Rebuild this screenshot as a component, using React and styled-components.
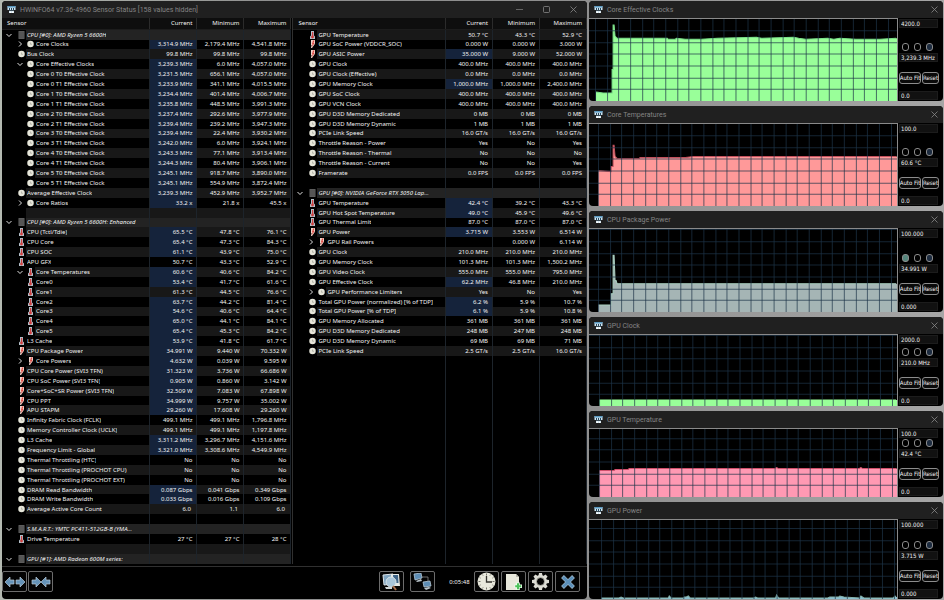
import React from 'react'
import styled, { createGlobalStyle, css } from 'styled-components'

const GlobalStyle = createGlobalStyle`
  * {
    box-sizing: border-box;
  }
  body {
    margin: 0;
    background: linear-gradient(90deg, #b4bab2, #8e8e8e 30%, #8e8e8e 60%, #a6a6a6);
    color: #f2f2f2;
    font-family: 'Noto Sans', 'Open Sans', sans-serif;
    font-size: 6px;
    line-height: 8px;
  }
  button,
  input {
    font: inherit;
    color: inherit;
    margin: 0;
    padding: 0;
  }
`

const Desktop = styled.div`
  display: grid;
  grid-template-columns: 585fr 354fr;
  gap: 2px;
  height: 100vh;
  min-height: 500px;
  padding: 1px 1px 1px 2px;
`

const Window = styled.section`
  display: flex;
  flex-direction: column;
  min-width: 0;
  min-height: 0;
  flex: ${p => p.$weight || 1} 1 0;
  background: #000;
  border-radius: 4px;
  overflow: hidden;
`

const TitleBar = styled.header`
  display: flex;
  align-items: center;
  flex: none;
  height: 17px;
  padding: 0 5px;
  background: #202020;
  color: #848484;
`

const Title = styled.h1`
  flex: 1;
  margin: 0 0 0 4px;
  font-family: Roboto, sans-serif;
  font-size: 7px;
  font-weight: 400;
  line-height: 10px;
  white-space: nowrap;
`

const WindowButton = styled.button`
  display: flex;
  align-items: center;
  justify-content: center;
  width: ${p => (p.$wide ? 27 : 8)}px;
  height: 12px;
  border: 0;
  background: none;
`

const WindowButtons = styled.div`
  display: flex;
  margin-right: -5px;
`

const Panels = styled.div`
  display: grid;
  grid-template-columns: 289fr 294fr;
  gap: 1px;
  flex: 1;
  min-height: 0;
  padding-bottom: 2px;
  border-bottom: 1px solid #303030;
`

const Panel = styled.div`
  min-width: 0;
  height: 100%;
  ${p =>
    p.$divided &&
    css`
      border-left: 1px solid #303030;
    `}
`

const Table = styled.table`
  width: 100%;
  height: 100%;
  table-layout: fixed;
  border-collapse: collapse;
`

const HeadCell = styled.th`
  width: ${p => (p.$name ? 'auto' : '47px')};
  height: 11px;
  padding: ${p => (p.$name ? '0 0 0 5px' : '0 4px 0 0')};
  border-right: 1px solid #2b2b2b;
  border-bottom: 1px solid #1c1c1c;
  background: #0e0e0e;
  font-weight: 400;
  text-align: ${p => (p.$name ? 'left' : 'right')};
`

const rowColor = p => (p.$group ? '#232323' : p.$striped ? '#181818' : '#000')

const NameCell = styled.td`
  height: 8px;
  padding: 0;
  border-right: 1px solid #1d242b;
`

const NameLine = styled.div`
  display: flex;
  align-items: center;
  height: 100%;
`

const Gutter = styled.span`
  display: flex;
  align-items: center;
  justify-content: flex-end;
  flex: none;
  gap: ${p => (p.$group ? 6 : 4)}px;
  width: ${p => (p.$level ? 33 : 24)}px;
  padding-right: 1px;
`

const Label = styled.span`
  flex: 1;
  min-width: 0;
  align-self: stretch;
  display: flex;
  align-items: center;
  padding-left: 1px;
  background: ${rowColor};
  ${p =>
    p.$group &&
    css`
      font-style: italic;
    `}
`

const LabelText = styled.span`
  overflow: hidden;
  text-overflow: ellipsis;
  white-space: nowrap;
`

const ValueCell = styled.td`
  padding: 0 4px 0 0;
  border-right: 1px solid #1d242b;
  background: ${p => (p.$changed ? '#15233b' : rowColor(p))};
  text-align: right;
  white-space: pre;
`

const Toggle = styled.button`
  display: flex;
  border: 0;
  background: none;
`

const ToolBar = styled.footer`
  display: flex;
  align-items: center;
  flex: none;
  height: 32px;
  padding: 0 7px 3px 0;
`

const ToolButton = styled.button`
  display: flex;
  align-items: center;
  justify-content: center;
  width: 25px;
  height: 21px;
  border: 1px solid #6c6c6c;
  border-radius: 2px;
  background: #030303;
`

const ToolGroup = styled.div`
  display: flex;
  align-items: center;
  gap: ${p => p.$gap}px;
  ${p =>
    p.$push &&
    css`
      margin-left: auto;
    `}
`

const Elapsed = styled.time`
  width: 39px;
  padding-left: 10px;
  text-align: center;
`

const GraphColumn = styled.div`
  display: flex;
  flex-direction: column;
  gap: 5px;
  min-width: 0;
  min-height: 0;
`

const GraphBody = styled.div`
  display: flex;
  flex: 1;
  min-height: 0;
`

const Plot = styled.svg`
  display: block;
  flex: 1;
  min-width: 0;
  height: 100%;
  border: solid #8a8a8a;
  border-width: 1px 1px 0 0;
`

const Controls = styled.div`
  display: flex;
  flex-direction: column;
  align-items: flex-start;
  flex: none;
  width: 45px;
  padding: 1px 4px 1px 1px;
`

const ScaleInput = styled.input`
  flex: none;
  width: 39px;
  height: 9px;
  padding: 0 1px;
  border: 1px solid #1c1c1c;
  background: #111;
  font-family: 'DejaVu Sans Condensed', 'DejaVu Sans', sans-serif;
  line-height: 7px;
`

const Dots = styled.div`
  display: flex;
  gap: 5px;
  margin: auto 0 2px 3px;
`

const Dot = styled.button`
  width: 7px;
  height: 8px;
  border: 1px solid #8c8c8c;
  border-radius: 3px;
  background: ${p => p.$color || '#000'};
`

const GraphButtons = styled.div`
  display: flex;
  gap: 1px;
  margin: 10px 0 7px;
`

const GraphButton = styled.button`
  display: flex;
  align-items: center;
  justify-content: center;
  width: ${p => p.$width}px;
  height: 12px;
  border: 1px solid #8c8c8c;
  border-radius: 3px;
  background: #0a0a0a;
  font-family: 'DejaVu Sans Condensed', 'DejaVu Sans', sans-serif;
  white-space: nowrap;
`

const LogoIcon = () => (
  <svg width="9" height="9" viewBox="0 0 18 18">
    <path d="M1 2h16v8h-3v6H4v-6H1z" fill="#cfe3ee" />
    <path d="M1 2h16v3H1z" fill="#5a9ac2" />
    <path d="M4 6h2v4H4zM8 6h2v4H8zM12 6h2v4h-2z" fill="#24465c" />
    <path d="M4 10h10v2H4z" fill="#3a4a54" />
    <path d="M5 13h3v3H5zM10 13h3v3h-3z" fill="#fff" />
  </svg>
)

const ClockIcon = () => (
  <svg width="7" height="8" viewBox="0 0 14 16">
    <circle cx="7" cy="8" r="6.5" fill="#e6e6da" />
    <path d="M7 5v3.5h3" fill="none" stroke="#a8a89e" strokeWidth="1.5" />
  </svg>
)

const ThermoIcon = () => (
  <svg width="7" height="8" viewBox="0 0 14 16">
    <path d="M4 0h6v9l2 2v5H2v-5l2-2z" fill="#b3bfc8" />
    <path d="M6 2h2.5v9H6z" fill="#d04040" />
    <circle cx="7" cy="12" r="2.8" fill="#d04040" />
  </svg>
)

const BoltIcon = () => (
  <svg width="7" height="8" viewBox="0 0 14 16">
    <path d="M4 0h8v7l-1 2-5 7H4l1-6H4z" fill="#f1d3ca" />
    <path d="M8 1h3L9 6h2l-5 8 1-6H6z" fill="#dc4a44" />
  </svg>
)

const ChipIcon = () => (
  <svg width="7" height="8" viewBox="0 0 14 16">
    <path d="M1 0h12v16H1z" fill="#5c5c5c" />
    <path d="M0 4h14M0 8h14M0 12h14" stroke="#424242" strokeWidth="1" />
  </svg>
)

const Chevron = ({ open }) => (
  <svg width="6" height="6" viewBox="0 0 12 12">
    <path
      d={open ? 'M1 4l5 5 5-5' : 'M4 1l5 5-5 5'}
      fill="none"
      stroke="#e0e0e0"
      strokeWidth="2"
    />
  </svg>
)

const CloseIcon = () => (
  <svg width="7" height="7" viewBox="0 0 7 7">
    <path d="M.5.5l6 6M6.5.5l-6 6" stroke="#8a8a8a" strokeWidth="0.8" />
  </svg>
)

const MinimizeIcon = () => (
  <svg width="7" height="7" viewBox="0 0 7 7">
    <path d="M0 3.5h7" stroke="#777" strokeWidth="0.8" />
  </svg>
)

const MaximizeIcon = () => (
  <svg width="7" height="7" viewBox="0 0 7 7">
    <rect x="0.5" y="0.5" width="6" height="6" rx="1" fill="none" stroke="#888" strokeWidth="0.8" />
  </svg>
)

const ExpandIcon = () => (
  <svg width="20" height="12" viewBox="0 0 20 12">
    <path
      d="M0 6l5-5v3h4v4H5v3zM20 6l-5-5v3h-4v4h4v3z"
      fill="#6593b8"
      stroke="#b9c9d4"
      strokeWidth="0.7"
    />
  </svg>
)

const CollapseIcon = () => (
  <svg width="20" height="12" viewBox="0 0 20 12">
    <path
      d="M10 6L5 1v3H1v4h4v3zM10 6l5-5v3h4v4h-4v3z"
      fill="#6593b8"
      stroke="#b9c9d4"
      strokeWidth="0.7"
    />
  </svg>
)

const SensorsIcon = () => (
  <svg width="19" height="18" viewBox="0 0 19 18">
    <path d="M1 2l10-1 1 10-10 1z" fill="#7ea3bf" stroke="#dfe6ea" />
    <path d="M9 1h8l1 12h-9z" fill="#e4e8e6" />
    <path d="M11 2h5l.5 8h-5z" fill="#3d6488" />
    <circle cx="9" cy="9" r="5" fill="#a9c6da" stroke="#d9e3e8" />
    <path d="M11 13l3 4" stroke="#a56c4c" strokeWidth="2" />
    <path d="M3 14h7v2H4z" fill="#cfd6d8" />
  </svg>
)

const NetworkIcon = () => (
  <svg width="19" height="17" viewBox="0 0 19 17">
    <path d="M9 4h6v4" fill="none" stroke="#8a8a8a" strokeWidth="0.8" />
    <path d="M1 1l7-1 1 5-7 2z" fill="#5d8db5" stroke="#b5c8d6" strokeWidth="0.8" />
    <path d="M3 8l5-2 1 2-5 1z" fill="#b9c4ca" />
    <path d="M10 9l7-1 1 5-7 1z" fill="#5d8db5" stroke="#b5c8d6" strokeWidth="0.8" />
    <path d="M11 15l5-1 2 1-5 2z" fill="#b9c4ca" />
  </svg>
)

const BigClockIcon = () => (
  <svg width="19" height="19" viewBox="0 0 19 19">
    <circle cx="9.5" cy="9.5" r="9" fill="#e8e8dc" />
    <path
      d="M9.5 1.5v2M9.5 15.5v2M1.5 9.5h2M15.5 9.5h2M5.5 2.6l.6 1M13.5 2.6l-.6 1M5.5 16.4l.6-1M13.5 16.4l-.6-1M2.6 5.5l1 .6M16.4 5.5l-1 .6M2.6 13.5l1-.6M16.4 13.5l-1-.6"
      stroke="#55554e"
      strokeWidth="0.8"
    />
    <path d="M9.5 4v6H15" fill="none" stroke="#33332e" strokeWidth="1.3" />
  </svg>
)

const LogFileIcon = () => (
  <svg width="18" height="18" viewBox="0 0 18 18">
    <path d="M1 1h10l3 3v13H1z" fill="#e8e8dc" />
    <path d="M11 1v3h3z" fill="#b5b5aa" />
    <path d="M13 9.5v7.5M9.5 13.3H17" stroke="#eaffea" strokeWidth="3.6" />
    <path d="M13 10.3v6M10.2 13.3h6" stroke="#4cc25a" strokeWidth="2" />
  </svg>
)

const teeth = [0, 45, 90, 135, 180, 225, 270, 315]

const SettingsIcon = () => (
  <svg width="19" height="19" viewBox="0 0 19 19">
    {teeth.map(angle => (
      <path key={angle} d="M8 1h3l.6 3H7.4z" fill="#dcdcd4" transform={`rotate(${angle} 9.5 9.5)`} />
    ))}
    <circle cx="9.5" cy="9.5" r="5" fill="none" stroke="#dcdcd4" strokeWidth="3" />
    <circle cx="9.5" cy="9.5" r="4" fill="none" stroke="#77776f" strokeWidth="0.6" />
  </svg>
)

const QuitIcon = () => (
  <svg width="14" height="14" viewBox="0 0 14 14">
    <path d="M1.5 1.5l11 11M12.5 1.5l-11 11" stroke="#a3bccd" strokeWidth="4" />
    <path d="M2 2l10 10M12 2L2 12" stroke="#5b8fb9" strokeWidth="3" />
  </svg>
)

const icons = { clock: ClockIcon, temp: ThermoIcon, power: BoltIcon, chip: ChipIcon }

const group = name => ({ name, icon: 'chip', group: true, open: true })
const blank = { name: '' }

// a leading * on the current value marks it as changed
const row = (icon, name, current, min, max, extra) => ({
  icon,
  name,
  changed: current[0] === '*',
  values: [current.replace('*', ''), min, max],
  ...extra
})
const child = { level: 1 }
const opened = { level: 1, toggle: true, open: true }
const closed = { level: 1, toggle: true, open: false }

const cpuRows = [
  group('CPU [#0]: AMD Ryzen 5 6600H'),
  row('clock', 'Core Clocks', '*3,314.9 MHz', '2,179.4 MHz', '4,541.8 MHz', closed),
  row('clock', 'Bus Clock', '99.8 MHz', '99.8 MHz', '99.8 MHz'),
  row('clock', 'Core Effective Clocks', '*3,239.3 MHz', '6.0 MHz', '4,057.0 MHz', opened),
  row('clock', 'Core 0 T0 Effective Clock', '*3,231.5 MHz', '656.1 MHz', '4,057.0 MHz', child),
  row('clock', 'Core 0 T1 Effective Clock', '*3,233.9 MHz', '341.1 MHz', '4,015.5 MHz', child),
  row('clock', 'Core 1 T0 Effective Clock', '*3,234.4 MHz', '401.4 MHz', '4,006.7 MHz', child),
  row('clock', 'Core 1 T1 Effective Clock', '*3,235.8 MHz', '448.5 MHz', '3,991.3 MHz', child),
  row('clock', 'Core 2 T0 Effective Clock', '*3,237.4 MHz', '292.6 MHz', '3,977.9 MHz', child),
  row('clock', 'Core 2 T1 Effective Clock', '*3,239.4 MHz', '239.2 MHz', '3,947.3 MHz', child),
  row('clock', 'Core 3 T0 Effective Clock', '*3,239.4 MHz', '22.4 MHz', '3,930.2 MHz', child),
  row('clock', 'Core 3 T1 Effective Clock', '*3,242.0 MHz', '6.0 MHz', '3,924.1 MHz', child),
  row('clock', 'Core 4 T0 Effective Clock', '*3,243.3 MHz', '77.1 MHz', '3,913.4 MHz', child),
  row('clock', 'Core 4 T1 Effective Clock', '*3,244.3 MHz', '80.4 MHz', '3,906.1 MHz', child),
  row('clock', 'Core 5 T0 Effective Clock', '*3,245.1 MHz', '918.7 MHz', '3,890.0 MHz', child),
  row('clock', 'Core 5 T1 Effective Clock', '*3,245.1 MHz', '554.9 MHz', '3,872.4 MHz', child),
  row('clock', 'Average Effective Clock', '*3,239.3 MHz', '452.9 MHz', '3,952.7 MHz'),
  row('clock', 'Core Ratios', '*33.2 x', '21.8 x', '45.5 x', closed),
  blank,
  group('CPU [#0]: AMD Ryzen 5 6600H: Enhanced'),
  row('temp', 'CPU (Tctl/Tdie)', '*65.5 °C', '47.8 °C', '76.1 °C'),
  row('temp', 'CPU Core', '*65.4 °C', '47.3 °C', '84.3 °C'),
  row('temp', 'CPU SOC', '*61.1 °C', '43.9 °C', '75.0 °C'),
  row('temp', 'APU GFX', '50.7 °C', '43.3 °C', '52.9 °C'),
  row('temp', 'Core Temperatures', '*60.6 °C', '40.6 °C', '84.2 °C', opened),
  row('temp', 'Core0', '*53.4 °C', '41.7 °C', '61.6 °C', child),
  row('temp', 'Core1', '61.3 °C', '44.5 °C', '76.6 °C', child),
  row('temp', 'Core2', '*63.7 °C', '44.2 °C', '81.4 °C', child),
  row('temp', 'Core3', '*54.6 °C', '40.6 °C', '64.4 °C', child),
  row('temp', 'Core4', '*65.0 °C', '44.1 °C', '84.1 °C', child),
  row('temp', 'Core5', '*65.4 °C', '45.3 °C', '84.2 °C', child),
  row('temp', 'L3 Cache', '*53.9 °C', '41.8 °C', '61.7 °C'),
  row('power', 'CPU Package Power', '*34.991 W', '9.440 W', '70.332 W'),
  row('power', 'Core Powers', '*4.632 W', '0.039 W', '9.595 W', closed),
  row('power', 'CPU Core Power (SVI3 TFN)', '*31.323 W', '3.736 W', '66.686 W'),
  row('power', 'CPU SoC Power (SVI3 TFN)', '*0.905 W', '0.860 W', '3.142 W'),
  row('power', 'Core+SoC+SR Power (SVI3 TFN)', '*32.509 W', '7.083 W', '67.898 W'),
  row('power', 'CPU PPT', '*34.999 W', '9.757 W', '35.002 W'),
  row('power', 'APU STAPM', '*29.260 W', '17.608 W', '29.260 W'),
  row('clock', 'Infinity Fabric Clock (FCLK)', '499.1 MHz', '499.1 MHz', '1,796.8 MHz'),
  row('clock', 'Memory Controller Clock (UCLK)', '499.1 MHz', '499.1 MHz', '1,197.8 MHz'),
  row('clock', 'L3 Cache', '*3,311.2 MHz', '3,296.7 MHz', '4,151.6 MHz'),
  row('clock', 'Frequency Limit - Global', '*3,321.0 MHz', '3,308.6 MHz', '4,549.9 MHz'),
  row('clock', 'Thermal Throttling (HTC)', 'No', 'No', 'No'),
  row('clock', 'Thermal Throttling (PROCHOT CPU)', 'No', 'No', 'No'),
  row('clock', 'Thermal Throttling (PROCHOT EXT)', 'No', 'No', 'No'),
  row('clock', 'DRAM Read Bandwidth', '*0.087 Gbps', '0.041 Gbps', '0.349 Gbps'),
  row('clock', 'DRAM Write Bandwidth', '*0.033 Gbps', '0.016 Gbps', '0.109 Gbps'),
  row('clock', 'Average Active Core Count', '6.0 ', '1.1 ', '6.0 '),
  blank,
  group('S.M.A.R.T.: YMTC PC411-512GB-B (YMA...'),
  row('temp', 'Drive Temperature', '27 °C', '27 °C', '28 °C'),
  blank,
  group('GPU [#1]: AMD Radeon 600M series:')
]

const gpuRows = [
  row('temp', 'GPU Temperature', '50.7 °C', '43.3 °C', '52.9 °C'),
  row('power', 'GPU SoC Power (VDDCR_SOC)', '0.000 W', '0.000 W', '3.000 W'),
  row('power', 'GPU ASIC Power', '*35.000 W', '9.000 W', '52.000 W'),
  row('clock', 'GPU Clock', '400.0 MHz', '400.0 MHz', '400.0 MHz'),
  row('clock', 'GPU Clock (Effective)', '0.0 MHz', '0.0 MHz', '0.0 MHz'),
  row('clock', 'GPU Memory Clock', '*1,000.0 MHz', '1,000.0 MHz', '2,400.0 MHz'),
  row('clock', 'GPU SoC Clock', '400.0 MHz', '400.0 MHz', '400.0 MHz'),
  row('clock', 'GPU VCN Clock', '400.0 MHz', '400.0 MHz', '400.0 MHz'),
  row('clock', 'GPU D3D Memory Dedicated', '0 MB', '0 MB', '0 MB'),
  row('clock', 'GPU D3D Memory Dynamic', '1 MB', '1 MB', '1 MB'),
  row('clock', 'PCIe Link Speed', '16.0 GT/s', '16.0 GT/s', '16.0 GT/s'),
  row('clock', 'Throttle Reason - Power', 'Yes', 'No', 'Yes'),
  row('clock', 'Throttle Reason - Thermal', 'No', 'No', 'No'),
  row('clock', 'Throttle Reason - Current', 'No', 'No', 'Yes'),
  row('clock', 'Framerate', '0.0 FPS', '0.0 FPS', '0.0 FPS'),
  blank,
  group('GPU [#0]: NVIDIA GeForce RTX 3050 Lap...'),
  row('temp', 'GPU Temperature', '*42.4 °C', '39.2 °C', '43.3 °C'),
  row('temp', 'GPU Hot Spot Temperature', '*49.0 °C', '45.9 °C', '49.6 °C'),
  row('temp', 'GPU Thermal Limit', '87.0 °C', '87.0 °C', '87.0 °C'),
  row('power', 'GPU Power', '*3.715 W', '3.553 W', '6.514 W'),
  row('power', 'GPU Rail Powers', '', '0.000 W', '6.114 W', closed),
  row('clock', 'GPU Clock', '210.0 MHz', '210.0 MHz', '210.0 MHz'),
  row('clock', 'GPU Memory Clock', '101.3 MHz', '101.3 MHz', '1,500.2 MHz'),
  row('clock', 'GPU Video Clock', '555.0 MHz', '555.0 MHz', '795.0 MHz'),
  row('clock', 'GPU Effective Clock', '*62.2 MHz', '46.8 MHz', '210.0 MHz'),
  row('clock', 'GPU Performance Limiters', 'Yes', 'No', 'Yes', closed),
  row('clock', 'Total GPU Power (normalized) [% of TDP]', '*6.2 %', '5.9 %', '10.7 %'),
  row('clock', 'Total GPU Power [% of TDP]', '*6.1 %', '5.9 %', '10.8 %'),
  row('clock', 'GPU Memory Allocated', '361 MB', '361 MB', '361 MB'),
  row('clock', 'GPU D3D Memory Dedicated', '248 MB', '247 MB', '248 MB'),
  row('clock', 'GPU D3D Memory Dynamic', '69 MB', '69 MB', '71 MB'),
  row('clock', 'PCIe Link Speed', '2.5 GT/s', '2.5 GT/s', '16.0 GT/s')
]

const graphs = [
  {
    title: 'Core Effective Clocks',
    top: '4200.0',
    value: '3,239.3 MHz',
    bottom: '0.0',
    weight: 100,
    height: 81,
    firstLine: 6,
    fill: '#99ff99',
    stroke: '#7be08a',
    points: [[7, 9], [14, 8], [23, 8], [23, 31], [24, 31], [24, 75], [25, 75], [26, 64], [28, 62], [78, 62], [79, 61], [86, 61], [87, 62], [96, 61], [112, 61], [128, 62], [167, 63], [172, 62], [204, 63], [209, 62], [216, 61], [238, 62], [244, 61], [250, 62], [266, 61], [290, 61], [306, 62]]
  },
  {
    title: 'Core Temperatures',
    top: '100.0',
    value: '60.6 °C',
    bottom: '0.0',
    weight: 100,
    height: 81,
    firstLine: 9,
    fill: '#ff9999',
    stroke: '#c2505c',
    points: [[9, 35], [22, 34], [22, 39], [24, 39], [24, 60], [25, 60], [26, 49], [28, 47], [50, 47], [51, 48], [96, 48], [104, 49], [306, 49]]
  },
  {
    title: 'CPU Package Power',
    top: '100.000',
    value: '34.991 W',
    bottom: '0.000',
    weight: 101,
    height: 82,
    firstLine: 9,
    fill: '#a5b5b5',
    stroke: '#a9cfc0',
    firstDot: '#55857c',
    points: [[9, 7], [22, 7], [22, 18], [24, 18], [24, 56], [25, 56], [26, 31], [27, 31], [28, 28], [306, 28]]
  },
  {
    title: 'GPU Clock',
    top: '2000.0',
    value: '210.0 MHz',
    bottom: '0.0',
    weight: 89,
    height: 70,
    firstLine: 10,
    fill: '#99ff99',
    stroke: '#99ff99',
    points: [[10, 6], [306, 6]]
  },
  {
    title: 'GPU Temperature',
    top: '100.0',
    value: '42.4 °C',
    bottom: '0.0',
    weight: 86,
    height: 67,
    firstLine: 10,
    fill: '#ff99b3',
    stroke: '#d0506c',
    points: [[10, 26], [25, 26], [26, 27], [39, 27], [40, 28], [185, 28], [187, 29], [189, 28], [269, 28], [271, 29], [273, 28], [306, 28]]
  },
  {
    title: 'GPU Power',
    top: '100.000',
    value: '3.715 W',
    bottom: '0.000',
    weight: 97,
    height: 78,
    firstLine: 12,
    fill: '#8cc0d2',
    stroke: '#86b3ac',
    points: [[12, 1], [30, 1], [32, 2], [34, 1], [79, 1], [80, 3], [82, 1], [94, 1], [95, 2], [97, 2], [99, 3], [101, 1], [164, 1], [166, 2], [168, 1], [186, 1], [187, 4], [189, 1], [238, 1], [240, 2], [249, 2], [250, 3], [254, 2], [270, 1], [271, 3], [274, 1], [303, 1], [305, 3], [306, 2]]
  }
]

const GRID_STEP = 35 / 3

function Graph({ title, height, firstLine, fill, stroke, points }) {
  const line = points.map(([x, y]) => `${x},${height - y}`).join(' ')
  const columns = []
  const rows = []
  for (let x = firstLine; x < 306; x += GRID_STEP) columns.push(Math.round(x))
  for (let y = height - GRID_STEP; y > 0; y -= GRID_STEP) rows.push(Math.round(y))

  return (
    <Plot viewBox={`0 0 307 ${height}`} preserveAspectRatio="none" role="img" aria-label={title}>
      <polygon
        points={`${points[0][0]},${height} ${line} 307,${height - points[points.length - 1][1]} 307,${height}`}
        fill={fill}
      />
      <polyline points={line} fill="none" stroke={stroke} strokeWidth="1" />
      <g stroke="rgba(30, 52, 72, 0.7)" strokeWidth="1">
        {columns.map(x => (
          <path key={x} d={`M${x + 0.5} 0v${height}`} />
        ))}
        {rows.map(y => (
          <path key={y} d={`M0 ${y + 0.5}h307`} />
        ))}
      </g>
    </Plot>
  )
}

function GraphWindow(props) {
  const { title, top, value, bottom, weight, firstDot } = props
  return (
    <Window $weight={weight}>
      <TitleBar>
        <LogoIcon />
        <Title as="h2">{title}</Title>
        <WindowButton aria-label="Close">
          <CloseIcon />
        </WindowButton>
      </TitleBar>
      <GraphBody>
        <Graph {...props} />
        <Controls>
          <ScaleInput aria-label={`${title} upper limit`} defaultValue={top} />
          <Dots>
            <Dot $color={firstDot} aria-label="Graph color" />
            <Dot aria-label="Background color" />
            <Dot $color="#1d2c40" aria-label="Grid color" />
          </Dots>
          <ScaleInput aria-label={`${title} current value`} value={value} readOnly />
          <GraphButtons>
            <GraphButton $width={22}>Auto Fit</GraphButton>
            <GraphButton $width={17}>Reset</GraphButton>
          </GraphButtons>
          <ScaleInput aria-label={`${title} lower limit`} defaultValue={bottom} />
        </Controls>
      </GraphBody>
    </Window>
  )
}

function SensorRow({ item, index }) {
  const Icon = icons[item.icon]
  const look = { $group: item.group, $striped: index % 2 === 0 }
  const values = item.values || ['', '', '']

  return (
    <tr>
      <NameCell>
        <NameLine>
          <Gutter $level={item.level} $group={item.group}>
            {(item.group || item.toggle) && (
              <Toggle aria-label={`Toggle ${item.name}`} aria-expanded={item.open}>
                <Chevron open={item.open} />
              </Toggle>
            )}
            {Icon && <Icon />}
          </Gutter>
          <Label {...look}>
            <LabelText>{item.name}</LabelText>
          </Label>
        </NameLine>
      </NameCell>
      {values.map((value, i) => (
        <ValueCell key={i} {...look} $changed={i === 0 && item.changed}>
          {value}
        </ValueCell>
      ))}
    </tr>
  )
}

function SensorTable({ rows, divided }) {
  const emptyRows = Array.from({ length: cpuRows.length - rows.length }, (_, i) => i)
  return (
    <Panel $divided={divided}>
      <Table>
        <thead>
          <tr>
            <HeadCell $name>Sensor</HeadCell>
            <HeadCell>Current</HeadCell>
            <HeadCell>Minimum</HeadCell>
            <HeadCell>Maximum</HeadCell>
          </tr>
        </thead>
        <tbody>
          {rows.map((item, i) => (
            <SensorRow key={i} item={item} index={i} />
          ))}
          {emptyRows.map(i => (
            <tr key={i}>
              <NameCell />
              <ValueCell />
              <ValueCell />
              <ValueCell />
            </tr>
          ))}
        </tbody>
      </Table>
    </Panel>
  )
}

export default function App() {
  return (
    <Desktop>
      <GlobalStyle />
      <Window>
        <TitleBar>
          <LogoIcon />
          <Title>HWiNFO64 v7.36-4960 Sensor Status [158 values hidden]</Title>
          <WindowButtons>
            <WindowButton $wide aria-label="Minimize">
              <MinimizeIcon />
            </WindowButton>
            <WindowButton $wide aria-label="Maximize">
              <MaximizeIcon />
            </WindowButton>
            <WindowButton $wide aria-label="Close">
              <CloseIcon />
            </WindowButton>
          </WindowButtons>
        </TitleBar>
        <Panels>
          <SensorTable rows={cpuRows} />
          <SensorTable rows={gpuRows} divided />
        </Panels>
        <ToolBar>
          <ToolGroup $gap={1}>
            <ToolButton aria-label="Expand columns">
              <ExpandIcon />
            </ToolButton>
            <ToolButton aria-label="Collapse columns">
              <CollapseIcon />
            </ToolButton>
          </ToolGroup>
          <ToolGroup $gap={6} $push>
            <ToolButton aria-label="Sensor summary">
              <SensorsIcon />
            </ToolButton>
            <ToolButton aria-label="Remote sensors">
              <NetworkIcon />
            </ToolButton>
          </ToolGroup>
          <Elapsed>0:05:48</Elapsed>
          <ToolGroup $gap={2}>
            <ToolButton aria-label="Reset clock">
              <BigClockIcon />
            </ToolButton>
            <ToolButton aria-label="Start logging">
              <LogFileIcon />
            </ToolButton>
            <ToolButton aria-label="Settings">
              <SettingsIcon />
            </ToolButton>
            <ToolButton aria-label="Close sensors">
              <QuitIcon />
            </ToolButton>
          </ToolGroup>
        </ToolBar>
      </Window>
      <GraphColumn>
        {graphs.map(graph => (
          <GraphWindow key={graph.title} {...graph} />
        ))}
      </GraphColumn>
    </Desktop>
  )
}
